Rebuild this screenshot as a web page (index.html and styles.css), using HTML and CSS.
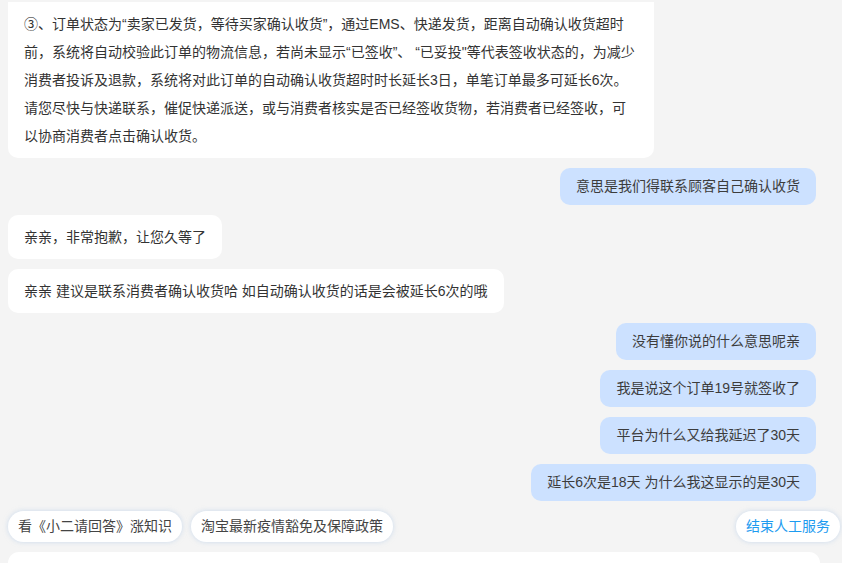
FILE: index.html
```html
<!DOCTYPE html>
<html lang="zh-CN">
<head>
<meta charset="utf-8">
<title>聊天</title>
<link rel="stylesheet" href="styles.css">
</head>
<body>
<div class="page">
  <div class="chat">
    <div class="msg left long"><span class="ln">③、订单状态为“卖家已发货，等待买家确认收货”，通过EMS、快递发货，距离自动确认收货超时</span><br><span class="ln">前，系统将自动校验此订单的物流信息，若尚未显示“已签收”、 “已妥投"等代表签收状态的，为减少</span><br><span class="ln">消费者投诉及退款，系统将对此订单的自动确认收货超时时长延长3日，单笔订单最多可延长6次。</span><br><span class="ln">请您尽快与快递联系，催促快递派送，或与消费者核实是否已经签收货物，若消费者已经签收，可</span><br><span class="ln">以协商消费者点击确认收货。</span></div>
    <div class="msg right">意思是我们得联系顾客自己确认收货</div>
    <div class="msg left">亲亲，非常抱歉，让您久等了</div>
    <div class="msg left">亲亲 建议是联系消费者确认收货哈 如自动确认收货的话是会被延长6次的哦</div>
    <div class="msg right">没有懂你说的什么意思呢亲</div>
    <div class="msg right">我是说这个订单19号就签收了</div>
    <div class="msg right">平台为什么又给我延迟了30天</div>
    <div class="msg right">延长6次是18天 为什么我这显示的是30天</div>
  </div>
  <div class="chips">
    <div class="chip-group">
      <span class="chip">看《小二请回答》涨知识</span>
      <span class="chip">淘宝最新疫情豁免及保障政策</span>
    </div>
    <span class="chip chip-blue">结束人工服务</span>
  </div>
  <div class="panel"></div>
</div>
</body>
</html>
```
FILE: styles.css
```css
html, body {
  margin: 0;
  padding: 0;
  height: 563px;
  overflow: hidden;
  background: #f4f4f4;
}

body {
  font-family: "Liberation Sans", "Noto Sans CJK SC", sans-serif;
  font-size: 14px;
  color: #333333;
}

.page {
  display: flex;
  flex-direction: column;
  padding-top: 2px;
}

.chat {
  display: flex;
  flex-direction: column;
  gap: 10px;
  padding: 0 26px 0 8px;
}

.msg {
  box-sizing: border-box;
  padding: 8px 16px;
  border-radius: 10px;
  white-space: nowrap;
}

.left {
  align-self: flex-start;
  background: #ffffff;
  line-height: 28px;
}

.long {
  width: 646px;
  border-radius: 0 0 10px 10px;
}

.right {
  align-self: flex-end;
  background: #cce1ff;
  line-height: 21px;
  color: #3c3c3c;
}

.chips {
  display: flex;
  justify-content: space-between;
  align-items: center;
  margin-top: 10px;
  padding: 0 2px 0 8px;
}

.chip-group {
  display: flex;
  gap: 9px;
}

.chip {
  display: inline-block;
  height: 31px;
  line-height: 31px;
  padding: 0 10px;
  background: #ffffff;
  border-radius: 16px;
  box-shadow: 0 0 5px rgba(170, 196, 230, 0.55);
  color: #444444;
  white-space: nowrap;
}

.chip-blue {
  color: #1d9bf0;
}

.panel {
  margin: 10px 22px 0 8px;
  height: 11px;
  background: #ffffff;
  border-radius: 12px 12px 0 0;
}
```
